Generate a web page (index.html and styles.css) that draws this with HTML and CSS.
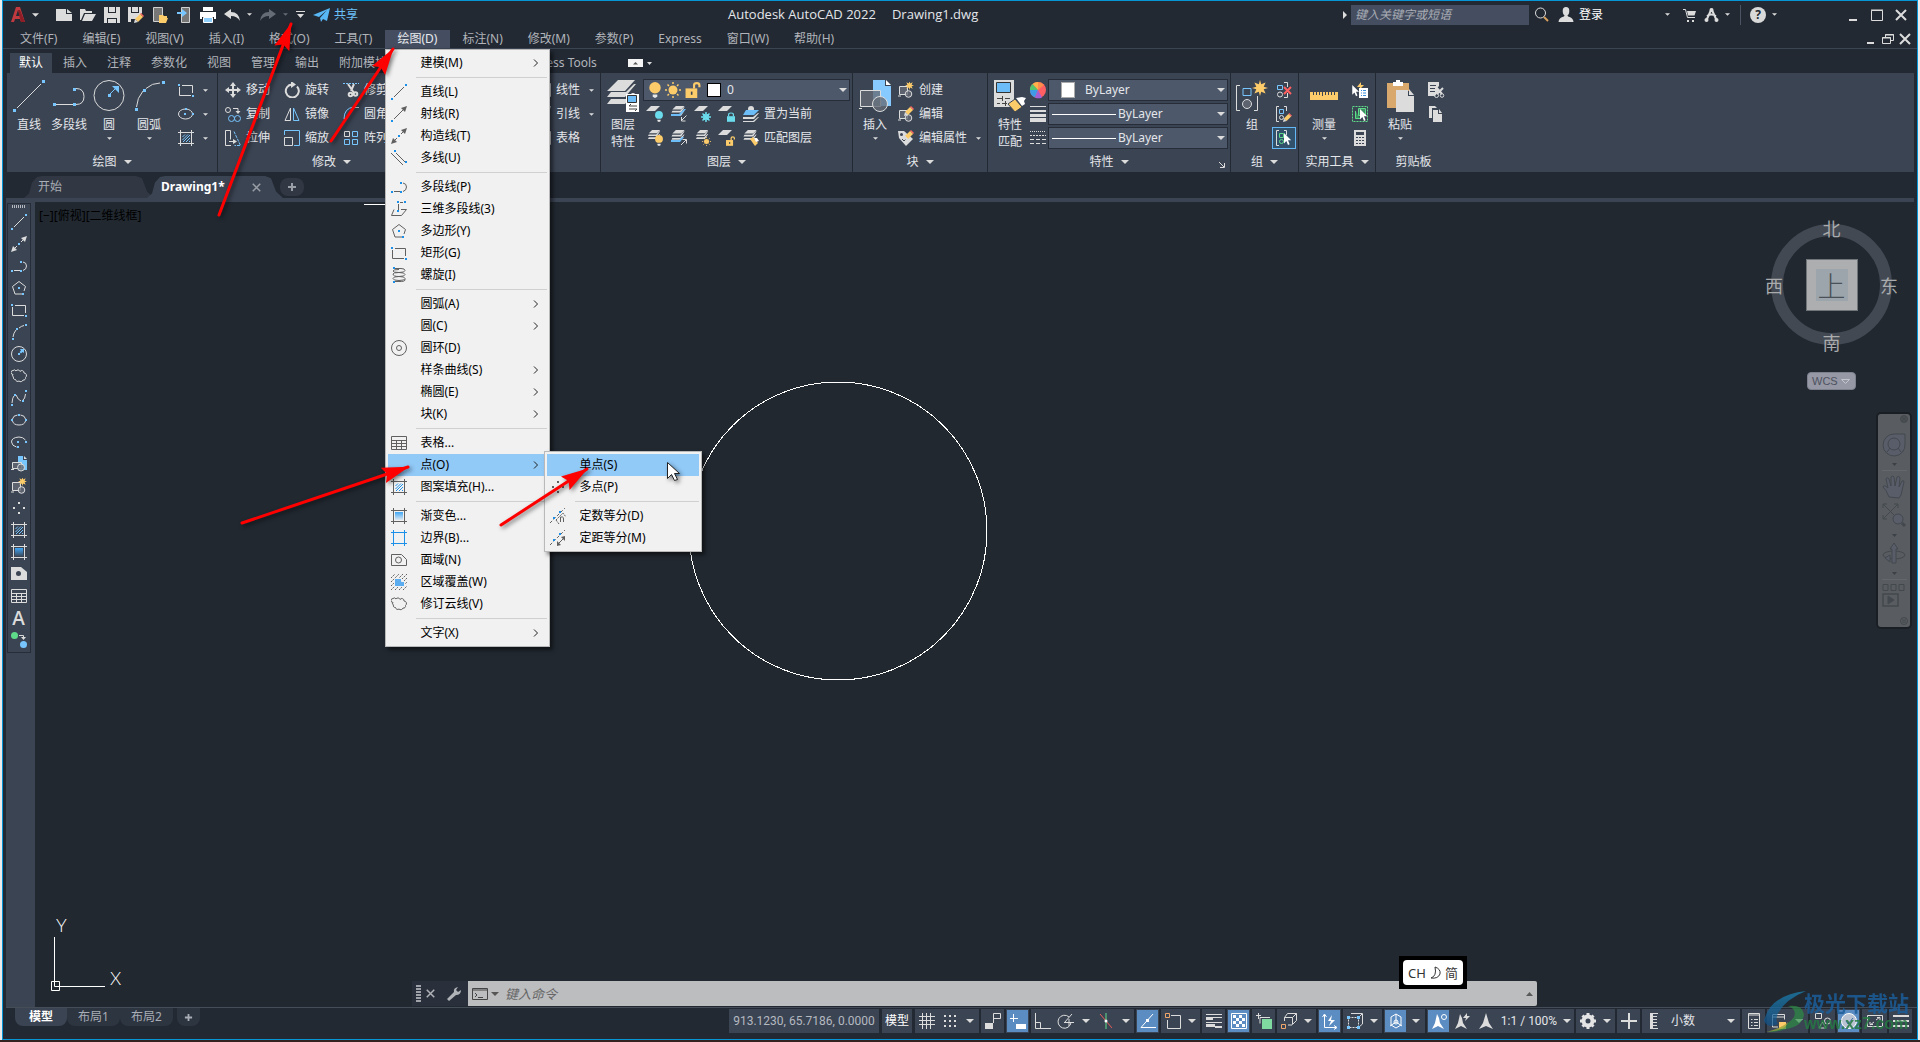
FILE: index.html
```html
<!DOCTYPE html>
<html lang="zh-CN">
<head>
<meta charset="utf-8">
<title>Autodesk AutoCAD 2022 - Drawing1.dwg</title>
<link rel="stylesheet" href="styles.css">
</head>
<body>
<svg class="defs" aria-hidden="true">
  <defs>
    <linearGradient id="fade" x1="0" y1="0" x2="0" y2="1"><stop offset="0" stop-color="#3fa6f5"/><stop offset="1" stop-color="#3fa6f5" stop-opacity=".1"/></linearGradient>
    <linearGradient id="wave" x1="0" y1="0" x2="0" y2="1"><stop offset="0" stop-color="#1d86b8"/><stop offset="1" stop-color="#0f4f86"/></linearGradient>
  </defs>
  <symbol id="caret" viewBox="0 0 8 4"><path class="f" d="M0 0h8L4 4z"/></symbol>
  <symbol id="chev" viewBox="0 0 6 8"><path class="s" d="M1 .5L4.500 4 1 7.500"/></symbol>
  <symbol id="line" viewBox="0 0 16 16"><path class="s" d="M3 13L13 3"/><path class="d" d="M0 14h2v2H0zM14 0h2v2h-2z"/></symbol>
  <symbol id="ray" viewBox="0 0 16 16"><path class="s" d="M3 13L13 3"/><path class="f" d="M16 0l-2 6-4-4z"/><path class="d" d="M0 14h2v2H0z"/></symbol>
  <symbol id="xline" viewBox="0 0 16 16"><path class="s" d="M3 13l3-3M10 6l3-3"/><path class="f" d="M16 0l-2 6-4-4zM0 16l2-6 4 4z"/><path class="d" d="M7 7h2v2H7z"/></symbol>
  <symbol id="mline" viewBox="0 0 16 16"><path class="s" d="M0 3l12 12M5 3l9 9"/><path class="d" d="M3 0h2v2H3zM14 11h2v2h-2z"/></symbol>
  <symbol id="pline" viewBox="0 0 16 16"><path class="s" d="M3 12.500h6M12 4q3.500.5 3.500 4T12 12.500"/><path class="d" d="M0 12h2v2H0zM9 12h2v2H9zM9 3h2v2H9z"/></symbol>
  <symbol id="p3d" viewBox="0 0 16 16"><path class="s" d="M7.500 3v6M9 1.500h3M3 8.500l-2.500 6h10l5-6H10"/><path class="d" d="M6 0h2v2H6zM13 0h2v2h-2zM6 9h2v2H6z"/></symbol>
  <symbol id="poly" viewBox="0 0 16 16"><path class="s" d="M11 14H4L1.500 6.500 8 1.500l6.500 5L13 11"/><path class="d" d="M7 7h2v2H7zM11 13h2v2h-2z"/></symbol>
  <symbol id="rect" viewBox="0 0 16 16"><path class="s" d="M4 3.500h10.500V11M1.500 5v8.500H13"/><path class="d" d="M0 2h2v2H0zM14 13h2v2h-2z"/></symbol>
  <symbol id="helix" viewBox="0 0 16 16"><path class="s" d="M4 1.500h6q4 0 4 2t-6 2-6-1.500 6-1.500M2 7q0-1.500 6-1.500t6 2-6 2-6-2.500M2 11.500q0-2 6-2t6 2-6 2-6-2M14 12q1 3-7 2.500H4"/><path class="d" d="M2 0h2v2H2zM2 14h2v2H2z"/></symbol>
  <symbol id="arc" viewBox="0 0 16 16"><path class="s" d="M2 13q.5-4 3-7M8 4q2.500-2 5-2.500"/><path class="d" d="M1 14h2v2H1zM5 4h2v2H5zM14 0h2v2h-2z"/></symbol>
  <symbol id="circ" viewBox="0 0 16 16"><circle class="s" cx="8" cy="8" r="7.500"/><path class="d" d="M7 7h2v2H7zM9 3h4v4l-1.500-1L10 7.500 8.500 6 10 4.500z"/></symbol>
  <symbol id="donut" viewBox="0 0 16 16"><circle class="s" cx="8" cy="8" r="7.500"/><circle class="s" cx="8" cy="8" r="2.500"/></symbol>
  <symbol id="cloud" viewBox="0 0 16 16"><path class="s" d="M2 6.500A2 2 0 0 1 2 2.500A2 2 0 0 1 5 3A2.200 2.200 0 0 1 9 3.500A2.200 2.200 0 0 1 13 5A2.500 2.500 0 0 1 14.500 9.500A2 2 0 0 1 12 12A2.400 2.400 0 0 1 8 13A2.200 2.200 0 0 1 4.500 11.500A1.800 1.800 0 0 1 2.500 9A1.600 1.600 0 0 1 2 6.500z"/></symbol>
  <symbol id="spline" viewBox="0 0 16 16"><path class="s" d="M1 13q.5-6 2-7M5 5q2 5 5 6M12 10q2-1 2.500-6"/><path class="d" d="M0 14h2v2H0zM3 4h2v2H3zM11 10h2v2h-2zM14 0h2v2h-2z"/></symbol>
  <symbol id="elli" viewBox="0 0 16 16"><path class="s" d="M9.500 3q4.500.5 5 4M6.500 3q-4.500.5-5 4M1.500 9q1 4 6.500 4t6.500-4"/><path class="d" d="M7 2h2v2H7zM0 7h2v2H0zM14 7h2v2h-2z"/></symbol>
  <symbol id="elli2" viewBox="0 0 16 16"><ellipse class="s" cx="7.500" cy="8" rx="7" ry="5"/><path class="d" d="M6 7h2v2H6zM14 7h2v2h-2zM7 2h2v2H7z"/></symbol>
  <symbol id="ellarc" viewBox="0 0 16 16"><path class="s" d="M14.500 6Q12 3 8 3 .5 3.500.5 8q.5 4 5 5"/><path class="d" d="M6 7h2v2H6zM14 7h2v2h-2zM6 12h2v2H6z"/></symbol>
  <symbol id="ins" viewBox="0 0 16 16"><path fill="#78c6ff" d="M7 0h5v4h4v10H7z"/><path class="f" d="M13 0l3 3h-3z"/><path class="s g" d="M1.500 6.500h9v6h-9zM0 13.500h3"/><circle class="s g" cx="10" cy="11.500" r="3.500"/></symbol>
  <symbol id="star" viewBox="0 0 16 16"><path fill="#fccb6a" d="M8 0l1.200 4.300L13.600 2.400 11.700 6.800 16 8l-4.300 1.200 1.900 4.400-4.400-1.900L8 16l-1.200-4.300-4.400 1.900 1.900-4.400L0 8l4.300-1.200-1.900-4.400 4.400 1.900z"/></symbol>
  <symbol id="mkblock" viewBox="0 0 16 16"><path class="s g" d="M1.500 4.500h8v8h-8zM0 14h3"/><circle class="s g" cx="10.500" cy="12" r="3.300"/><use href="#star" x="7" y="-1" width="9" height="9"/></symbol>
  <symbol id="pencil" viewBox="0 0 10 10"><path fill="#ff6464" d="M7 0l3 3-1 1-3-3z"/><path fill="#fccb6a" d="M6 1l3 3-5 5-3-3z"/><path class="f" d="M1 6l3 3-4 1z"/></symbol>
  <symbol id="edblock" viewBox="0 0 16 16"><path class="s g" d="M1.500 4.500h8v8h-8zM0 14h3"/><circle class="s g" cx="10.500" cy="12" r="3.300"/><use href="#pencil" x="6" y="0" width="10" height="10"/></symbol>
  <symbol id="attr" viewBox="0 0 16 16"><path class="f" d="M0 1h6l9 8-7 7-7-8z"/><circle cx="3.500" cy="4.500" r="1.500" fill="#3b4453"/><path d="M4 9l2 2 4-4" fill="none" stroke="#3b4453"/><use href="#pencil" x="6" y="0" width="10" height="10"/></symbol>
  <symbol id="pts" viewBox="0 0 16 16"><path class="f" d="M7 2h2v2H7zM2 7h2v2H2zM12 7h2v2h-2zM7 12h2v2H7z"/></symbol>
  <symbol id="hatch" viewBox="0 0 16 16"><path class="s" d="M0 2.500h16M0 13.500h16M2.500 0v16M13.500 0v16"/><path class="sd" d="M4.500 7L7 4.500M4.500 10l5.500-5.500M5 12l7-7M8 12l4-4M11 12l1-1"/></symbol>
  <symbol id="grad" viewBox="0 0 16 16"><path class="s" d="M0 2.500h16M0 13.500h16M2.500 0v16M13.500 0v16"/><path fill="url(#fade)" d="M4 4h8v8H4z"/></symbol>
  <symbol id="bound" viewBox="0 0 16 16"><path class="sd" d="M0 2.500h16M0 13.500h16M2.500 0v16M13.500 0v16"/></symbol>
  <symbol id="region" viewBox="0 0 16 16"><path class="s" d="M.5 2.500h10l5 5v6H.5z"/><circle class="s" cx="7.500" cy="8" r="3"/></symbol>
  <symbol id="regionf" viewBox="0 0 16 16"><path class="f" d="M0 1h10l6 5v8H0z"/><circle cx="7.500" cy="7.500" r="2.500" fill="#3b4453"/></symbol>
  <symbol id="wipe" viewBox="0 0 16 16"><path class="s" stroke-dasharray="2 1" d="M0 4l4-4M0 8l8-8M0 12L12 0M0 16L16 0M4 16L16 4M8 16l8-8M12 16l4-4"/><path fill="#5badf0" stroke="#f1f1f1" d="M3.500 4.500h7v3h3v5h-10z"/></symbol>
  <symbol id="tbl" viewBox="0 0 16 16"><path class="s" d="M.5 1.500h15v13H.5zM0 5.500h16M0 8.500h16M0 11.500h16M5.500 5v9M10.500 5v9"/></symbol>
  <symbol id="addsel" viewBox="0 0 16 16"><circle cx="3.500" cy="3.500" r="3.500" fill="#5fdc8a"/><circle cx="12.500" cy="12.500" r="3.500" fill="#78c6ff"/><path class="s" d="M8 3.500h4.500V6"/><path class="f" d="M10 5h5l-2.500 3z"/></symbol>
  <symbol id="divn" viewBox="0 0 16 16"><path class="s" stroke-dasharray="3 2" d="M0 15L15 0"/><path class="s" stroke-dasharray="2 1" d="M6 12l7-7 3 4M6 12l3 4"/><path class="s" d="M10.500 14V9h2q1 0 1 2v3"/><path class="d" d="M3 9h2v2H3zM9 3h2v2H9z"/></symbol>
  <symbol id="divm" viewBox="0 0 16 16"><path class="s" stroke-dasharray="3 2" d="M0 15L15 0"/><path class="s" d="M8 14l6-6"/><path class="f" d="M7 16v-5l4 4zM15 6v5l-4-4z"/><path class="d" d="M3 9h2v2H3zM9 3h2v2H9z"/></symbol>
  <symbol id="move" viewBox="0 0 16 16"><path class="s2" d="M8 2v12M2 8h12"/><path class="f" d="M8 0l3 4H5zM8 16l3-4H5zM0 8l4-3v6zM16 8l-4-3v6z"/></symbol>
  <symbol id="copy" viewBox="0 0 16 16"><circle class="s" cx="3" cy="4" r="2.500"/><circle class="sd" cx="6.500" cy="12.500" r="3"/><circle class="sd" cx="12.500" cy="12.500" r="3"/><path class="s" d="M8 2.500h5V6"/><path class="f" d="M10.500 5h5L13 8z"/></symbol>
  <symbol id="stretch" viewBox="0 0 16 16"><path class="s" d="M6 15.500H.5V.5h5v9M4 11.500h5"/><path class="f" d="M8 9l4 2.500L8 14z"/><path class="sd" stroke-dasharray="3 1" d="M9 1.500l6.500 14h-6"/></symbol>
  <symbol id="rot" viewBox="0 0 16 16"><path class="s2" d="M13 4.500A6.500 6.500 0 1 1 8 2.500"/><path class="f" d="M7 -1l5 3.500-5 3.500z"/></symbol>
  <symbol id="mirror" viewBox="0 0 16 16"><path class="s" d="M6.500 2v12.500H1z"/><path class="sd" d="M9.500 2v12.500H15z"/></symbol>
  <symbol id="scale" viewBox="0 0 16 16"><path class="sd" d="M.5 5V.5h15v15H10"/><path class="s" d="M.5 7.500h8v8h-8z"/></symbol>
  <symbol id="trim" viewBox="0 0 16 16"><path class="sd" stroke-dasharray="2 1" d="M0 1.500h16"/><path class="s2" d="M5 2l6 9M11 2L8 9"/><circle class="s2" cx="7.500" cy="12.500" r="1.800"/><circle class="s2" cx="12.500" cy="12" r="1.800"/></symbol>
  <symbol id="fillet" viewBox="0 0 16 16"><path class="sd" d="M1 13q0-11 10-12"/><path class="s" d="M1.500 12v4M10 1.500h6"/></symbol>
  <symbol id="array" viewBox="0 0 16 16"><path class="s" d="M1.500 1.500h5v5h-5z"/><path class="sd" d="M9.500 1.500h5v5h-5zM1.500 9.500h5v5h-5zM9.500 9.500h5v5h-5z"/></symbol>
  <symbol id="sheets" viewBox="0 0 16 16"><path class="f" d="M5 0h10l-4 4H1zM1 5.500h9l4-4h1l-4 6H0zM1 9h9l4-4h1l-4 6H0z"/></symbol>
  <symbol id="sheet1" viewBox="0 0 16 16"><path class="f" d="M5 1h9l-5 5H0z"/></symbol>
  <symbol id="bulb" viewBox="0 0 10 14"><circle cx="5" cy="5" r="5" fill="var(--c,#fccb6a)"/><path fill="#e8e8e8" d="M3 11h4v2l-2 1-2-1z"/></symbol>
  <symbol id="sun" viewBox="0 0 16 16"><circle cx="8" cy="8" r="4.500" fill="#fccb6a"/><path stroke="#fccb6a" stroke-width="1.500" d="M8 0v2M8 14v2M0 8h2M14 8h2M2.500 2.500l1.500 1.500M12 12l1.500 1.500M2.500 13.500L4 12M12 4l1.500-1.500"/></symbol>
  <symbol id="unlock" viewBox="0 0 14 15"><path fill="#fccb6a" d="M0 6h11v9H0z"/><path d="M8 6V3q0-2 2.500-2T13 3v2" fill="none" stroke="#fccb6a" stroke-width="2"/><path d="M5 9h1.500v3H5z" fill="#3b4453"/></symbol>
  <symbol id="lock" viewBox="0 0 10 12"><path fill="#6bdcec" d="M0 5h10v7H0z"/><path d="M2 5V3q0-2 3-2t3 2v2" fill="none" stroke="#6bdcec" stroke-width="1.500"/></symbol>
  <symbol id="flake" viewBox="0 0 10 10"><path stroke="#6bdcec" stroke-width="1.500" d="M5 0v10M0 5h10M1.500 1.500l7 7M8.500 1.500l-7 7"/><circle cx="5" cy="5" r="3" fill="none" stroke="#6bdcec"/></symbol>
  <symbol id="arrptr" viewBox="0 0 10 16"><path fill="#fff" d="M0 0v13l3-3 2 5 2-1-2-5h4z"/></symbol>
  <symbol id="x" viewBox="0 0 12 12"><path class="s2" d="M1 1l10 10M11 1L1 11"/></symbol>
  <symbol id="plus" viewBox="0 0 10 10"><path class="s2" d="M5 1v8M1 5h8"/></symbol>
  <symbol id="person" viewBox="0 0 16 16"><path class="f" d="M8 0q3.500 0 3.500 4T9.500 9q0 1 3 2t3.500 5H0q.5-4 3.500-5t3-2Q4.500 8 4.500 4T8 0z"/></symbol>
</svg>

<div class="app">
  <header class="title">
    <div class="quick">
      <button class="logo" aria-label="应用程序菜单"><svg width="14" height="15" viewBox="0 0 14 15"><path fill="#c23a3f" d="M5 0h4l5 15h-4l-1-3H4l-1 3H0zM7 3L5 9h4z"/><path fill="#8f1d25" d="M7 3l2 0 5 12h-4l-1-3z"/></svg><svg class="c" width="7" height="4"><use href="#caret"/></svg></button>
      <button aria-label="新建"><svg width="16" height="12" viewBox="0 0 16 12"><path class="f" d="M0 0h10v5h6v7H0zM11 0l5 4h-5z"/></svg></button>
      <button aria-label="打开"><svg width="16" height="12" viewBox="0 0 16 12"><path class="f" d="M0 0h5l1 2h6v2H4L1 11H0zM5 5h11l-4 7H2z"/></svg></button>
      <button aria-label="保存"><svg width="16" height="16" viewBox="0 0 16 16"><path class="f" d="M0 0h4v6h8V0h4v16h-3v-5H3v5H0zM5 0h6v5H5zM4 12h8v4H4z"/></svg></button>
      <button aria-label="另存为"><svg width="16" height="16" viewBox="0 0 16 16"><path class="f" d="M0 0h3v6h8V0h3v6L8 12H3v3H0zM4 0h6v5H4z"/><use href="#pencil" x="6" y="6" width="10" height="10"/></svg></button>
      <button aria-label="从移动端打开"><svg width="16" height="16" viewBox="0 0 16 16"><path fill="#777" stroke="#d0d0d0" d="M1.500.5h9v14h-9z"/><path fill="#fccb6a" d="M7 8h4l1 1h3v2h1l-2 5H7z"/></svg></button>
      <button aria-label="保存到移动端"><svg width="16" height="16" viewBox="0 0 16 16"><path fill="#777" stroke="#d0d0d0" d="M5.500.5h8v15h-8z"/><path fill="#78c6ff" d="M1 5h5V2l5 4-5 4V7H1z"/></svg></button>
      <button aria-label="打印"><svg width="16" height="16" viewBox="0 0 16 16"><path fill="#fff" d="M3 0h10v4H3zM0 5h16v7h-2v-2H2v2H0z"/><path fill="#8fd0ff" stroke="#fff" d="M3.500 10.500h9v5h-9z"/></svg></button>
      <button aria-label="放弃"><svg width="16" height="12" viewBox="0 0 16 12"><path class="f" d="M0 5l7-5v3q8 0 9 9-3-5-9-5v3z"/></svg><svg class="c" width="5" height="3"><use href="#caret"/></svg></button>
      <button class="off" aria-label="重做"><svg width="16" height="12" viewBox="0 0 16 12"><path class="f" d="M16 5L9 0v3Q1 3 0 12q3-5 9-5v3z"/></svg><svg class="c" width="5" height="3"><use href="#caret"/></svg></button>
      <button aria-label="自定义"><svg width="9" height="8" viewBox="0 0 9 8"><path class="f" d="M0 0h9v1H0zM1 3h7L4.500 7z"/></svg></button>
      <button class="share"><svg width="17" height="14" viewBox="0 0 17 14"><path fill="#58b7f5" d="M17 0l-3 13-4-2-2 3-1-4 7-8-8 7-6-2z"/></svg>共享</button>
    </div>
    <h1><span>Autodesk AutoCAD 2022</span><span>Drawing1.dwg</span></h1>
    <div class="info">
      <svg width="4" height="8" viewBox="0 0 4 8"><path class="f" d="M0 0l4 4-4 4z"/></svg>
      <input class="search" type="text" placeholder="键入关键字或短语" aria-label="搜索">
      <button aria-label="搜索"><svg width="14" height="15" viewBox="0 0 14 15"><circle class="s" cx="5.500" cy="6" r="5"/><path stroke="#d8a15c" stroke-width="2" d="M9 10l4 4"/></svg></button>
      <button class="login"><svg width="16" height="15"><use href="#person"/></svg>登录</button>
      <button class="wide" aria-label="帐户"><svg width="5" height="3"><use href="#caret"/></svg></button>
      <button aria-label="商店"><svg width="13" height="14" viewBox="0 0 13 14"><path class="s" d="M0 1.500h2.500l2 8H12"/><path class="f" d="M4 3h9l-1.500 4.500H5zM4 12h2v2H4zM9 12h2v2H9z"/></svg></button>
      <button aria-label="Autodesk"><svg width="15" height="14" viewBox="0 0 15 14"><path class="s2" d="M7.500 1l-5 11M7.500 1l5 11M3 8q4-3 9 0"/><circle class="f" cx="2.500" cy="12" r="2"/><circle class="f" cx="12.500" cy="12" r="2"/><circle class="f" cx="7.500" cy="2" r="2"/></svg><svg class="c" width="5" height="3"><use href="#caret"/></svg></button>
      <span class="bar"></span>
      <button class="help" aria-label="帮助"><span>?</span><svg class="c" width="5" height="3"><use href="#caret"/></svg></button>
      <div class="win">
        <button aria-label="最小化"><svg width="12" height="12" viewBox="0 0 12 12"><path class="f" d="M2 10h8v2H2z"/></svg></button>
        <button aria-label="最大化"><svg width="12" height="12" viewBox="0 0 12 12"><path class="s" d="M.5 1.500h11v10H.5zM0 1h12"/></svg></button>
        <button aria-label="关闭"><svg width="12" height="12"><use href="#x"/></svg></button>
      </div>
    </div>
  </header>

  <nav class="menubar">
    <button>文件(F)</button><button>编辑(E)</button><button>视图(V)</button><button>插入(I)</button><button>格式(O)</button><button>工具(T)</button>
    <div class="open">
      <button class="on">绘图(D)</button>
      <ul class="menu">
        <li><span></span>建模(M)<svg class="ar"><use href="#chev"/></svg></li>
        <li class="sep"></li>
        <li><svg><use href="#line"/></svg>直线(L)</li>
        <li><svg><use href="#ray"/></svg>射线(R)</li>
        <li><svg><use href="#xline"/></svg>构造线(T)</li>
        <li><svg><use href="#mline"/></svg>多线(U)</li>
        <li class="sep"></li>
        <li><svg><use href="#pline"/></svg>多段线(P)</li>
        <li><svg><use href="#p3d"/></svg>三维多段线(3)</li>
        <li><svg><use href="#poly"/></svg>多边形(Y)</li>
        <li><svg><use href="#rect"/></svg>矩形(G)</li>
        <li><svg><use href="#helix"/></svg>螺旋(I)</li>
        <li class="sep"></li>
        <li><span></span>圆弧(A)<svg class="ar"><use href="#chev"/></svg></li>
        <li><span></span>圆(C)<svg class="ar"><use href="#chev"/></svg></li>
        <li><svg><use href="#donut"/></svg>圆环(D)</li>
        <li><span></span>样条曲线(S)<svg class="ar"><use href="#chev"/></svg></li>
        <li><span></span>椭圆(E)<svg class="ar"><use href="#chev"/></svg></li>
        <li><span></span>块(K)<svg class="ar"><use href="#chev"/></svg></li>
        <li class="sep"></li>
        <li><svg><use href="#tbl"/></svg>表格...</li>
        <li class="hot"><span></span>点(O)<svg class="ar"><use href="#chev"/></svg>
          <ul class="menu sub">
            <li class="hot"><span></span>单点(S)</li>
            <li><svg><use href="#pts"/></svg>多点(P)</li>
            <li class="sep"></li>
            <li><svg><use href="#divn"/></svg>定数等分(D)</li>
            <li><svg><use href="#divm"/></svg>定距等分(M)</li>
          </ul>
        </li>
        <li><svg><use href="#hatch"/></svg>图案填充(H)...</li>
        <li class="sep"></li>
        <li><svg><use href="#grad"/></svg>渐变色...</li>
        <li><svg><use href="#bound"/></svg>边界(B)...</li>
        <li><svg><use href="#region"/></svg>面域(N)</li>
        <li><svg><use href="#wipe"/></svg>区域覆盖(W)</li>
        <li><svg><use href="#cloud"/></svg>修订云线(V)</li>
        <li class="sep"></li>
        <li><span></span>文字(X)<svg class="ar"><use href="#chev"/></svg></li>
      </ul>
    </div>
    <button>标注(N)</button><button>修改(M)</button><button>参数(P)</button><button>Express</button><button>窗口(W)</button><button>帮助(H)</button>
    <div class="win docwin">
      <button aria-label="最小化文档"><svg width="12" height="12" viewBox="0 0 12 12"><path class="f" d="M2 9h7v2H2z"/></svg></button>
      <button aria-label="还原文档"><svg width="12" height="12" viewBox="0 0 12 12"><path class="s" d="M3.500 4V1.500h8v6H9M3 2h9M.5 4.500h8v6h-8zM0 5h9"/></svg></button>
      <button aria-label="关闭文档"><svg width="12" height="12"><use href="#x"/></svg></button>
    </div>
  </nav>

  <nav class="tabs">
    <button class="on">默认</button><button>插入</button><button>注释</button><button>参数化</button><button>视图</button><button>管理</button><button>输出</button><button>附加模块</button><button class="under" aria-label="协作与精选应用"></button><button>Express Tools</button>
    <button class="mini" aria-label="最小化功能区"><svg width="24" height="8" viewBox="0 0 24 8"><path fill="#f4f4f4" d="M0 0h15v8H0z"/><path fill="#555" d="M5 5.500h5L7.500 3z"/><path class="f" d="M19 3h5l-2.500 3z"/></svg></button>
  </nav>

  <section class="ribbon">
    <div class="panel draw">
      <div class="body">
        <button class="big"><svg viewBox="0 0 32 32"><path class="s" d="M4 28L28 4"/><path class="d" d="M0 29h3v3H0zM29 0h3v3h-3z"/></svg>直线</button>
        <button class="big"><svg viewBox="0 0 32 32"><path class="s" d="M3 24.500h17M23 8.500q8 0 8 8t-8 8"/><path class="d" d="M0 23h3v3H0zM20 23h3v3h-3zM20 8h3v3h-3z"/></svg>多段线</button>
        <button class="big"><svg viewBox="0 0 32 32"><circle class="s" cx="16" cy="15.500" r="15"/><path class="sd" d="M17 14l6-6"/><path class="d" d="M15 14h3v3h-3zM19 6h7v7z"/></svg>圆<svg class="c"><use href="#caret"/></svg></button>
        <button class="big"><svg viewBox="0 0 32 32"><path class="s" d="M3.500 27Q4 18 10 11M13 8.500Q19 3 27 3"/><path class="d" d="M2 28h3v3H2zM10 9h3v3h-3zM29 1h3v3h-3z"/></svg>圆弧<svg class="c"><use href="#caret"/></svg></button>
        <div class="col nar">
          <button aria-label="矩形"><svg><use href="#rect"/></svg><svg class="c"><use href="#caret"/></svg></button>
          <button aria-label="椭圆"><svg><use href="#elli2"/></svg><svg class="c"><use href="#caret"/></svg></button>
          <button aria-label="图案填充"><svg><use href="#hatch"/></svg><svg class="c"><use href="#caret"/></svg></button>
        </div>
      </div>
      <button class="name">绘图<svg><use href="#caret"/></svg></button>
    </div>
    <div class="panel modify">
      <div class="body">
        <div class="col"><button><svg><use href="#move"/></svg>移动</button><button><svg><use href="#copy"/></svg>复制</button><button><svg><use href="#stretch"/></svg>拉伸</button></div>
        <div class="col"><button><svg><use href="#rot"/></svg>旋转</button><button><svg><use href="#mirror"/></svg>镜像</button><button><svg><use href="#scale"/></svg>缩放</button></div>
        <div class="col"><button><svg><use href="#trim"/></svg>修剪</button><button><svg><use href="#fillet"/></svg>圆角</button><button><svg><use href="#array"/></svg>阵列</button></div>
      </div>
      <button class="name">修改<svg><use href="#caret"/></svg></button>
    </div>
    <div class="panel note">
      <div class="body">
        <div class="col">
          <button><svg><use href="#tbl"/></svg>线性<svg class="c"><use href="#caret"/></svg></button>
          <button><svg><use href="#ray"/></svg>引线<svg class="c"><use href="#caret"/></svg></button>
          <button><svg><use href="#tbl"/></svg>表格</button>
        </div>
      </div>
    </div>
    <div class="panel layer">
      <div class="body">
        <button class="big"><svg viewBox="0 0 32 32"><path class="f" d="M11 0h17L18 11H0zM0 17l4-5h15l8-8h2L18 17zM0 24l4-5h15l6-6h3L18 24z"/><path fill="#fff" d="M19 14h13v18H19z"/><path fill="#6cbcf7" stroke="#333" d="M20.500 15.500h9v7h-9z"/><path class="k" d="M22 26h8M22 26l2-2M22 29h8l-2 2"/></svg>图层<br>特性</button>
        <div class="stack">
          <div class="combo"><svg class="ib"><use href="#bulb"/></svg><svg><use href="#sun"/></svg><svg><use href="#unlock"/></svg><i class="sw"></i><select aria-label="图层"><option>0</option></select><svg class="c"><use href="#caret"/></svg></div>
          <div class="tools">
            <button aria-label="关"><svg viewBox="0 0 16 16"><use href="#sheet1" x="-1" y="-1" width="16" height="16"/><use class="cy" href="#bulb" x="8" y="5" width="8" height="11"/></svg></button>
            <button aria-label="隔离"><svg viewBox="0 0 16 16"><use href="#sheets" width="15" height="14"/><path fill="#6cbcf7" d="M0 8h8l5-5h2l-6 7H0z"/><path class="s" d="M15.500 9.500l-5 5M10.500 11v4h4"/></svg></button>
            <button aria-label="冻结"><svg viewBox="0 0 16 16"><use href="#sheet1" x="-1" y="-1" width="16" height="16"/><use href="#flake" x="6" y="6" width="10" height="10"/></svg></button>
            <button aria-label="锁定"><svg viewBox="0 0 16 16"><use href="#sheet1" x="-1" y="-1" width="16" height="16"/><use href="#lock" x="8" y="6" width="8" height="10"/></svg></button>
            <button class="t"><svg viewBox="0 0 16 16"><circle class="f" cx="8" cy="3" r="3"/><path fill="#6cbcf7" d="M3 4h13l-5 5H0z"/><path class="f" d="M0 11h10l5-4h1l-5 6H0zM0 15h10l5-4h1l-5 5H0z"/></svg>置为当前</button>
          </div>
          <div class="tools">
            <button aria-label="打开所有图层"><svg viewBox="0 0 16 16"><use href="#sheets" width="15" height="13"/><use href="#bulb" x="8" y="5" width="8" height="11"/></svg></button>
            <button aria-label="取消隔离"><svg viewBox="0 0 16 16"><use href="#sheets" width="15" height="14"/><path fill="#6cbcf7" d="M0 10h8l3-3h2l-4 5H0z"/><path class="s" d="M10 15l5-5M11.500 9.500h4v4"/></svg></button>
            <button aria-label="解冻"><svg viewBox="0 0 16 16"><use href="#sheets" width="15" height="13"/><use href="#sun" x="7" y="7" width="9" height="9"/></svg></button>
            <button aria-label="解锁"><svg viewBox="0 0 16 16"><use href="#sheet1" x="-1" y="-1" width="16" height="16"/><use href="#unlock" x="7" y="6" width="9" height="10"/></svg></button>
            <button class="t"><svg viewBox="0 0 16 16"><use href="#sheets" width="15" height="14"/><path fill="#fccb6a" d="M7 9l3-2 5 6-3 3z"/><path fill="#fff" d="M11 8l3 0 2 3-3 1z"/></svg>匹配图层</button>
          </div>
        </div>
      </div>
      <button class="name">图层<svg><use href="#caret"/></svg></button>
    </div>
    <div class="panel block">
      <div class="body">
        <button class="big"><svg viewBox="0 0 32 32"><path fill="#87caff" d="M14 0h12v6h6v20H14z"/><path fill="#fff" d="M27 0l5 5h-5z"/><path class="s g" d="M1.500 10.500h20v16h-20zM0 28.500h3"/><circle class="s g" cx="21" cy="24" r="7.500"/></svg>插入<svg class="c"><use href="#caret"/></svg></button>
        <div class="col">
          <button><svg><use href="#mkblock"/></svg>创建</button>
          <button><svg><use href="#edblock"/></svg>编辑</button>
          <button><svg><use href="#attr"/></svg>编辑属性<svg class="c"><use href="#caret"/></svg></button>
        </div>
      </div>
      <button class="name">块<svg><use href="#caret"/></svg></button>
    </div>
    <div class="panel props">
      <div class="body">
        <button class="big"><svg viewBox="0 0 32 32"><path class="f" d="M0 0h20v27H0z"/><path fill="#6cbcf7" stroke="#333" d="M2.500 2.500h14v10h-14z"/><path class="k" d="M3 18.500h6M11 18.500h5M8.500 16v5M3 23.500h3M8 23.500h5M11.500 21v5"/><path fill="#fccb6a" stroke="#3b4453" d="M14 24l7-5 7 8-7 5z"/><path fill="#fff" d="M22 18l6-1 4 1-2 3 1 3-3 2z"/></svg>特性<br>匹配</button>
        <div class="stack">
          <div class="prow"><svg viewBox="0 0 16 16"><circle cx="8" cy="8" r="8" fill="#ff5f63"/><path fill="#ffb14a" d="M8 8l-5.500-6A8 8 0 0 1 8 0z"/><path fill="#ff8c4a" d="M8 8V0a8 8 0 0 1 6 3z"/><path fill="#54c46f" d="M8 8L0 9a8 8 0 0 1 2.500-7z"/><path fill="#3f9be8" d="M8 8L0 8a8 8 0 0 0 5 7.500z"/><path fill="#a35fd6" d="M8 8l-3 7.500a8 8 0 0 0 7 0z"/></svg><div class="combo"><i class="sw big2"></i><select aria-label="颜色"><option>ByLayer</option></select><svg class="c"><use href="#caret"/></svg></div></div>
          <div class="prow"><svg viewBox="0 0 16 16"><path class="f" d="M0 0h16v1H0zM0 4h16v2H0zM0 8h16v3H0zM0 12h16v4H0z"/></svg><div class="combo"><i class="ln"></i><select aria-label="线宽"><option>ByLayer</option></select><svg class="c"><use href="#caret"/></svg></div></div>
          <div class="prow"><svg viewBox="0 0 16 16"><path class="s" stroke-dasharray="1 1" d="M0 1.500h16"/><path class="s" stroke-dasharray="2 1" d="M0 5.500h16"/><path class="s" stroke-dasharray="4 2" d="M0 9.500h16M0 13.500h16"/></svg><div class="combo"><i class="ln"></i><select aria-label="线型"><option>ByLayer</option></select><svg class="c"><use href="#caret"/></svg></div></div>
        </div>
      </div>
      <button class="name">特性<svg><use href="#caret"/></svg></button>
      <button class="launch" aria-label="特性选项板"><svg width="6" height="6" viewBox="0 0 6 6"><path class="s" d="M0 0l5 5M5.500 1v4.500H1"/></svg></button>
    </div>
    <div class="panel group">
      <div class="body">
        <button class="big"><svg viewBox="0 0 32 32"><path class="s" d="M4 5.500H.5v25H4M18 30.500h3.500V16"/><path class="sd" d="M7 8.500h8v7H7z"/><circle class="s g" cx="11" cy="24" r="4.500"/><use href="#star" x="16" y="0" width="16" height="16"/></svg>组</button>
        <div class="col tight">
          <button aria-label="解除编组"><svg viewBox="0 0 16 16"><path class="sd" d="M1.500 3.500h5v4h-5z"/><circle class="s" cx="4" cy="12.500" r="2.500"/><path class="s" d="M8 .5h3.500V5M11.500 11v4.500H8"/><path stroke="#ff5f5f" stroke-width="2" d="M8 5l7 7M15 5l-7 7"/></svg></button>
          <button aria-label="组编辑"><svg viewBox="0 0 16 16"><path class="s" d="M3 .5H.5v15H3M8 .5h2.500V5"/><path class="sd" d="M3.500 3.500h4v4h-4z"/><circle class="s" cx="5.500" cy="11.500" r="2"/><use href="#pencil" x="7" y="7" width="9" height="9"/></svg></button>
          <button class="sel" aria-label="启用组选择"><svg viewBox="0 0 16 16"><path class="s" d="M3 .5H.5v15H3M8 .5h2.500V5"/><path stroke="#5fdc8a" fill="none" d="M3.500 3.500h4v4h-4z"/><circle stroke="#5fdc8a" fill="none" cx="5.500" cy="11.500" r="2"/><use href="#arrptr" x="8" y="3" width="8" height="13"/></svg></button>
        </div>
      </div>
      <button class="name">组<svg><use href="#caret"/></svg></button>
    </div>
    <div class="panel util">
      <div class="body">
        <button class="big"><svg viewBox="0 0 32 32"><path fill="#fccb6a" d="M2 12h28v8H2z"/><path stroke="#3b4453" d="M5.500 12v3M8.500 12v3M11.500 12v3M14.500 12v4M17.500 12v3M20.500 12v3M23.500 12v3M26.500 12v3"/></svg>测量<svg class="c"><use href="#caret"/></svg></button>
        <div class="col tight">
          <button aria-label="快速选择"><svg viewBox="0 0 16 16"><use href="#arrptr" x="0" y="3" width="8" height="12"/><path fill="#fccb6a" d="M9 0L5 5h3L7 8l5-5H9z"/><path fill="#fff" d="M7 6h9v10H7z"/><path stroke="#3a8fd8" d="M9 8.500h1M11 8.500h3M9 11h1M11 11h3M9 13.500h1M11 13.500h3"/></svg></button>
          <button aria-label="全部选择"><svg viewBox="0 0 16 16"><path fill="none" stroke="#5fdc8a" stroke-dasharray="2 1" d="M.5.5h15v15H.5z"/><path fill="#3d8f63" stroke="#5fdc8a" d="M6.500 2.500h7v7h-7zM3.500 5v7.500H8"/><use href="#arrptr" x="8" y="3" width="8" height="13"/></svg></button>
          <button aria-label="计算器"><svg viewBox="0 0 16 16"><path class="f" d="M2 0h12v16H2z"/><path fill="#3b4453" d="M4 2h8v3H4zM4 7h2v1H4zM7 7h2v1H7zM10 7h2v1h-2zM4 10h2v1H4zM7 10h2v1H7zM10 10h2v1h-2zM4 13h2v1H4zM7 13h2v1H7zM10 13h2v1h-2z"/></svg></button>
        </div>
      </div>
      <button class="name">实用工具<svg><use href="#caret"/></svg></button>
    </div>
    <div class="panel clip">
      <div class="body">
        <button class="big"><svg viewBox="0 0 32 32"><path fill="#d9a86c" d="M3 3h22v8H12v17H3z"/><path fill="#fff" d="M9 2h3V0h4v2h3v4H9z"/><path class="f" d="M12 10h12v6h6v16H12zM25 9l5 6h-5z"/></svg>粘贴<svg class="c"><use href="#caret"/></svg></button>
        <div class="col tight">
          <button aria-label="剪切"><svg viewBox="0 0 16 16"><path class="f" d="M0 0h11v4L9 6l2 3-4 5H0z"/><path stroke="#3b4453" d="M2 3.500h6M2 6.500h5M2 9.500h5"/><path class="s2" d="M8 5l6 7M15 6l-6 6"/><circle class="s" cx="8.500" cy="13.500" r="2"/><circle class="s" cx="14" cy="13.500" r="1.800"/></svg></button>
          <button aria-label="复制"><svg viewBox="0 0 16 16"><path class="f" d="M1 0h6l2 2H4v10H1zM5 4h5v4h4v8H5zM11 3l3 4h-3z"/></svg></button>
        </div>
      </div>
      <span class="name">剪贴板</span>
    </div>
  </section>

  <nav class="files">
    <button class="ftab">开始</button>
    <button class="ftab on">Drawing1*<svg width="9" height="9"><use href="#x"/></svg></button>
    <button class="ftab add" aria-label="新图形"><svg width="10" height="10"><use href="#plus"/></svg></button>
  </nav>

  <main class="work">
    <aside class="side">
      <div class="palette">
        <i class="grip"></i>
        <button aria-label="直线"><svg><use href="#line"/></svg></button>
        <button aria-label="构造线"><svg><use href="#xline"/></svg></button>
        <button aria-label="多段线"><svg><use href="#pline"/></svg></button>
        <button aria-label="多边形"><svg><use href="#poly"/></svg></button>
        <button aria-label="矩形"><svg><use href="#rect"/></svg></button>
        <button aria-label="圆弧"><svg><use href="#arc"/></svg></button>
        <button aria-label="圆"><svg><use href="#circ"/></svg></button>
        <button aria-label="修订云线"><svg><use href="#cloud"/></svg></button>
        <button aria-label="样条曲线"><svg><use href="#spline"/></svg></button>
        <button aria-label="椭圆"><svg><use href="#elli"/></svg></button>
        <button aria-label="椭圆弧"><svg><use href="#ellarc"/></svg></button>
        <button aria-label="插入块"><svg><use href="#ins"/></svg></button>
        <button aria-label="创建块"><svg><use href="#mkblock"/></svg></button>
        <button aria-label="点"><svg><use href="#pts"/></svg></button>
        <button aria-label="图案填充"><svg><use href="#hatch"/></svg></button>
        <button aria-label="渐变色"><svg><use href="#grad"/></svg></button>
        <button aria-label="面域"><svg><use href="#regionf"/></svg></button>
        <button aria-label="表格"><svg><use href="#tbl"/></svg></button>
        <button class="mtext">A</button>
        <button aria-label="添加选定对象"><svg><use href="#addsel"/></svg></button>
      </div>
    </aside>
    <div class="canvas">
      <p class="vlabel">[−][俯视][二维线框]</p>
      <svg class="geom" aria-hidden="true">
        <path fill="none" stroke="#fff" d="M329 2.500h30"/>
        <circle cx="803" cy="329" r="149" fill="none" stroke="#fff" shape-rendering="crispEdges"/>
      </svg>
      <svg class="ucs" width="76" height="76" viewBox="0 0 76 76"><path fill="none" stroke="#fff" d="M4.500 18v49.500H55M1.500 62.500h8v9h-8z"/><text x="6" y="13">Y</text><text x="60" y="66">X</text></svg>
      <div class="cube">
        <span class="n">北</span><span class="w">西</span><button class="top"><b>上</b></button><span class="e">东</span><span class="so">南</span>
      </div>
      <button class="wcs">WCS<svg width="9" height="5" viewBox="0 0 9 5"><path fill="none" stroke="#c4c6ce" d="M.5.5h8l-4 4z"/></svg></button>
      <div class="navbar">
        <svg width="32" height="213" viewBox="0 0 32 213" fill="none" stroke="#43484e">
          <circle cx="26" cy="5" r="3.500" fill="#4b5055"/><path d="M24 3l4 4M28 3l-4 4M24 206h4M24 208h4"/>
          <path fill="#585d69" d="M16 20h11v10a11 11 0 1 1-11-10z"/><circle cx="16" cy="30" r="6"/><path d="M9 38l3-4M23 38l-3-4"/>
          <path fill="#585d69" d="M11 83q-3-8-6-10 1-3 5 1l-2-9q1-3 3 0l2 7V63q2-2 3 0l1 9 2-9q2-2 3 1l-1 9 3-6q2-1 2 1l-3 13-2 3z"/>
          <path d="M5 90l15 15M20 90L5 105M5 94v-4h4M16 90h4v4M5 101v4h4"/><circle cx="20" cy="105" r="5" fill="#585d69"/><path stroke-width="3" d="M24 109l3 3"/>
          <ellipse cx="16" cy="141" rx="11" ry="4"/><path fill="#585d69" d="M14 149v-14h-2l4-6 4 6h-2v14zM12 141v7l-5-4z"/>
          <path d="M5 170.500h5v6H5zM13 170.500h5v6h-5zM21 170.500h5v6h-5z"/><path stroke-width="1.500" d="M5 180h15v12H5z"/><path fill="#43484e" d="M10 182l6 4-6 4z"/>
          <path fill="#3c4147" stroke="none" d="M14 49h5l-2.500 3zM14 120h5l-2.500 3zM14 158h5l-2.500 3z"/><path stroke="#64686c" d="M4 56.500h25M4 165.500h25"/><circle cx="26" cy="207" r="3.500"/>
        </svg>
      </div>
      <form class="cmd">
        <div class="grab"><i></i><svg width="9" height="9"><use href="#x"/></svg><svg width="14" height="14" viewBox="0 0 14 14"><path class="f" d="M0 12l7-7q-1-4 4-5L9 3l2 2 3-2q0 5-5 5l-7 6z"/></svg></div>
        <div class="box"><svg width="16" height="12" viewBox="0 0 16 12"><path class="k" d="M.5.500h15v11H.5zM1 2h14M3 5l2 2-2 2M6 9.500h5"/></svg><svg class="c" width="8" height="4"><use href="#caret"/></svg><input type="text" placeholder="键入命令" aria-label="命令"><svg class="c" width="7" height="4" viewBox="0 0 7 4"><path fill="#5a5a5a" d="M0 4h7L3.500 0z"/></svg></div>
      </form>
      <div class="ime"><div><span>CH</span><svg width="11" height="13" viewBox="0 0 11 13"><path fill="none" stroke="#333" d="M5 1q6 2 5 7-2 5-9 4 6-2 4-11z"/></svg><span>简</span></div></div>
    </div>
  </main>

  <footer class="foot">
    <nav class="layouts"><button class="on">模型</button><button>布局1</button><button>布局2</button><button class="add" aria-label="新建布局"><svg width="9" height="9"><use href="#plus"/></svg></button></nav>
    <div class="status">
      <button class="xyz">913.1230, 65.7186, 0.0000</button>
      <button class="mod">模型</button>
      <div class="grp"><button aria-label="栅格"><svg viewBox="0 0 16 16"><path class="s" d="M3.500 0v16M7.500 0v16M11.500 0v16M0 3.500h16M0 7.500h16M0 11.500h16"/></svg></button><button aria-label="捕捉"><svg viewBox="0 0 16 16"><path class="f" d="M2 2h2v2H2zM7 2h2v2H7zM12 2h2v2h-2zM2 7h2v2H2zM7 7h2v2H7zM12 7h2v2h-2zM2 12h2v2H2zM7 12h2v2H7zM12 12h2v2h-2z"/></svg></button><button class="dd w" aria-label="捕捉选项"><svg><use href="#caret"/></svg></button></div>
      <button aria-label="推断约束"><svg viewBox="0 0 16 16"><path class="f" d="M0 10h8v6H0z"/><path class="s" d="M8.500 10V.5h7v5H9"/></svg></button>
      <button class="on" aria-label="动态输入"><svg viewBox="0 0 16 16"><path class="s" d="M3.500 1v8M0 5.500h8"/><path class="f" d="M6 11h10v5H6z"/></svg></button>
      <div class="grp"><button aria-label="正交"><svg viewBox="0 0 16 16"><path class="s" d="M.5 0v15.500H16M.5 9.500h5v6"/></svg></button><button class="g2" aria-label="极轴"><svg viewBox="0 0 16 16"><path class="s" d="M11 4A6.500 6.500 0 1 0 13 9.500M6.500 9.500L14 1M6 9.500h10M11 6v7"/></svg></button><button class="dd" aria-label="极轴选项"><svg><use href="#caret"/></svg></button><button class="g2" aria-label="等轴测"><svg viewBox="0 0 16 16"><path stroke="#e85d5d" d="M2 1l12 14"/><path stroke="#5fdc8a" d="M8 0v16"/><circle cx="8" cy="8" r="1.500" fill="#fff"/></svg></button><button class="dd" aria-label="等轴测选项"><svg><use href="#caret"/></svg></button></div>
      <button class="on" aria-label="对象捕捉追踪"><svg viewBox="0 0 16 16"><path class="s" d="M13 1L1 14.500h15"/><path class="f" d="M6 6h3v3H6z"/></svg></button>
      <div class="grp"><button aria-label="对象捕捉"><svg viewBox="0 0 16 16"><path class="s" d="M6 2.500h9.500v13h-13V7"/><path fill="none" stroke="#f0a56a" d="M.5.5h4v4h-4z"/></svg></button><button class="dd" aria-label="捕捉设置"><svg><use href="#caret"/></svg></button></div>
      <button aria-label="线宽"><svg viewBox="0 0 16 16"><path class="f" d="M0 1h16v1H0zM0 4h9v1H0zM8 4h8v1H8zM0 5h7v2H0zM0 9h16v1H0zM0 11h9v3H0zM9 13h7v2H9z"/></svg></button>
      <button class="on" aria-label="透明度"><svg viewBox="0 0 16 16"><path class="s" d="M.5.5h15v15H.5z"/><path class="f" d="M2 2h3v3H2zM8 2h3v3H8zM5 5h3v3H5zM11 5h3v3h-3zM2 8h3v3H2zM8 8h3v3H8zM5 11h3v3H5zM11 11h3v3h-3z"/></svg></button>
      <button aria-label="选择循环"><svg viewBox="0 0 16 16"><path class="s" d="M2.500 0v6M0 2.500h5M4 10.500V4.500h10"/><path fill="#7fdba0" d="M6 6h10v10H6z"/></svg></button>
      <div class="grp"><button aria-label="三维对象捕捉"><svg viewBox="0 0 16 16"><path class="s" d="M3.500 8V4.500l3-4h9v7l-4 4V4.500h-8M11.500 4.500l4-4M11 12H7"/><path fill="none" stroke="#f0a56a" d="M.5 11.500h4v4h-4z"/></svg></button><button class="dd" aria-label="三维捕捉设置"><svg><use href="#caret"/></svg></button></div>
      <button class="on" aria-label="动态 UCS"><svg viewBox="0 0 16 16"><path class="s" d="M2.500 2v12.500H14M.5 4l2-3 2 3M12 12.500l3 2-3 2"/><path class="f" d="M10 2L6 8h3l-2 5 6-6H9z"/></svg></button>
      <div class="grp"><button aria-label="选择过滤"><svg viewBox="0 0 16 16"><path class="s" stroke-dasharray="2 1" d="M1.500 4.500h10v10h-10z"/><path class="s" d="M4 .5h11.500V11L12 14M12 4l3-3"/><path class="d" d="M0 3h3v3H0zM10 3h3v3h-3zM0 13h3v3H0zM10 13h3v3h-3z"/></svg></button><button class="dd" aria-label="过滤选项"><svg><use href="#caret"/></svg></button></div>
      <div class="grp"><button class="on" aria-label="小控件"><svg viewBox="0 0 16 16"><path class="s" d="M8 1v8L2 13M8 9l6 4M3 4l5-3 5 3v8l-5 3-5-3z"/><circle class="s" cx="8" cy="9" r="2"/></svg></button><button class="dd w" aria-label="小控件选项"><svg><use href="#caret"/></svg></button></div>
      <div class="grp"><button class="on" aria-label="注释可见性"><svg viewBox="0 0 16 16"><path class="f" d="M6 1l2 4 1 5 4 6-6-3-6 3 3-6z"/><circle class="s" cx="13" cy="4" r="2.500"/></svg></button><button class="g2" aria-label="自动缩放"><svg viewBox="0 0 16 16"><path class="f" d="M6 1l2 4 1 5 4 6-6-3-6 3 3-6zM13 0l-4 5h3l-1 3 5-5h-3z"/></svg></button><button class="g2" aria-label="注释比例图标"><svg viewBox="0 0 16 16"><path class="f" d="M8 0l3 10 4 6-7-3-7 3 4-6z"/></svg></button><button class="ratio">1:1 / 100%<svg><use href="#caret"/></svg></button></div>
      <div class="grp"><button aria-label="工作空间"><svg viewBox="0 0 16 16"><circle cx="8" cy="8" r="4.500" fill="none" stroke="#e4e4e4" stroke-width="4"/><path stroke="#e4e4e4" stroke-width="3" d="M8 0v3M8 13v3M0 8h3M13 8h3M2.500 2.500l2 2M11.500 11.500l2 2M2.500 13.500l2-2M11.500 4.500l2-2"/></svg></button><button class="dd" aria-label="工作空间选项"><svg><use href="#caret"/></svg></button></div>
      <button aria-label="注释监视器"><svg viewBox="0 0 16 16"><path class="s2" d="M8 0v16M0 8h16"/></svg></button>
      <button class="unit"><svg viewBox="0 0 8 16"><path class="f" d="M0 0h8v1H3v2h4v1H3v2h4v1H3v2h4v1H3v2h4v1H3v2h5v1H0z"/></svg><span>小数</span><svg class="c"><use href="#caret"/></svg></button>
      <button aria-label="快捷特性"><svg viewBox="0 0 16 16"><path class="s" d="M2.500.5h11v15h-11zM3 2h10M5 6.500h1.500M8 6.500h4M5 9.500h1.500M8 9.500h4M5 12.500h1.500M8 12.500h4"/></svg></button>
      <div class="grp"><button aria-label="锁定界面"><svg viewBox="0 0 16 16"><path class="s" d="M1.500 1.500h12v5M1.500 2v12H7M1 4h13"/><path fill="#fccb6a" d="M8 9h7v7H8z"/></svg></button><button class="dd w" aria-label="锁定选项"><svg><use href="#caret"/></svg></button></div>
      <button class="g3" aria-label="隔离对象"><svg viewBox="0 0 16 16"><path class="s" d="M.5.5h6v5h-6zM4 15l3.500-6 3.500 6z"/><circle class="s" cx="12.500" cy="8" r="3"/></svg></button>
      <button class="on" aria-label="图形性能"><svg viewBox="0 0 16 16"><circle cx="8" cy="8" r="7.500" fill="#b9c3d2" stroke="#fff"/><path stroke="#3c6ea5" fill="none" d="M5 8l2 3 5-6"/></svg></button>
      <button class="g3" aria-label="全屏显示"><svg viewBox="0 0 16 16"><path class="s" d="M.5 2.500h15v11H.5zM9 7l4-3M10 4.500h3V7M7 9l-4 3M3 9v2.500h3"/></svg></button>
      <button aria-label="自定义"><svg viewBox="0 0 16 16"><path class="f" d="M0 2h16v2H0zM0 7h16v2H0zM0 12h16v2H0z"/></svg></button>
    </div>
    <div class="mark">
      <svg width="42" height="42" viewBox="0 0 42 42"><path fill="url(#wave)" d="M0 30Q6 4 42 0 22 8 14 22q-3 8 0 11Q4 38 0 30z" opacity=".85"/><path fill="#2d8f45" opacity=".8" d="M24 15q14-2 16 8-1 12-18 15-8 3-18 3 20-6 26-15 3-8-6-11z"/><path fill="#b6ad3a" opacity=".7" d="M2 41q16-4 22-10-2 9-22 10z"/></svg>
      <div><strong>极光下载站</strong><em>www.xz7.com</em></div>
    </div>
  </footer>
</div>

<svg class="guide" aria-hidden="true">
  <defs><marker id="head" markerUnits="userSpaceOnUse" markerWidth="28" markerHeight="18" refX="26" refY="8" orient="auto"><path fill="#f00" d="M0 0L27 8 0 16l4-8z"/></marker></defs>
  <g stroke="#f00" stroke-width="3" stroke-linecap="round">
    <path marker-end="url(#head)" d="M219 215L291 24"/>
    <path marker-end="url(#head)" d="M331 141L393 49"/>
    <path marker-end="url(#head)" d="M242 523L408 467"/>
    <path marker-end="url(#head)" d="M501 525L587 469"/>
  </g>
  <path fill="#fff" stroke="#222" d="M667.500 462.500v16l4-4 3 6 3-1-3-6h5z"/>
</svg>
</body>
</html>
```
FILE: styles.css
```css
* { box-sizing: border-box; }
:root {
  --dark: #222933;
  --panel: #3b4453;
  --field: #4d586b;
  --text: #e4e6ea;
  --ink: #dcdcdc;
  --dot: #78c6ff;
}
body {
  margin: 0;
  min-height: 100vh;
  padding: 0 2px 2px;
  background: linear-gradient(#ececec, #ececec) 0 0 / 100% calc(100% - 2px) no-repeat #33221f;
  color: var(--text);
  font: 12px/16px "Noto Sans", "Noto Sans CJK SC", sans-serif;
  overflow: hidden;
}
button, input, select {
  margin: 0; padding: 0; border: 0; background: none;
  color: inherit; font: inherit; outline: 0; border-radius: 0;
}
button { white-space: nowrap; }
svg { width: 16px; height: 16px; flex: none; overflow: visible; }
svg[width] { width: auto; height: auto; }
.defs { position: absolute; width: 0; height: 0; overflow: hidden; }
.f { fill: var(--ink); }
.d { fill: var(--dot); }
.s, .s2, .sd, .k { fill: none; stroke: var(--ink); stroke-width: 1; }
.s2 { stroke-width: 2; }
.sd { stroke: var(--dot); }
.k { stroke: #444; }
.g { fill: #656b77; fill-opacity: .8; }
.c { width: 5px; height: 3px; }

.app {
  display: flex; flex-direction: column;
  height: calc(100vh - 2px);
  border: 1px solid #0696d7;
  background: var(--dark);
}

/* title bar */
.title { display: flex; height: 29px; padding-bottom: 2px; align-items: center; justify-content: space-between; position: relative; }
.quick, .info, .quick button, .info button { display: flex; align-items: center; }
.quick { padding-left: 8px; }
.quick button { margin-right: 8px; }
.quick button .c { margin-left: 7px; }
.quick .logo { margin-right: 17px; }
.quick .off { --ink: #666c75; }
.quick .share { gap: 4px; color: #6cc0f8; margin-left: 0; }
.title h1 {
  position: absolute; left: 725px; top: 4px;
  display: flex; gap: 16px; margin: 0;
  font: 400 13px/18px "Open Sans", sans-serif;
}
.info { padding-right: 10px; }
.search { width: 178px; height: 20px; margin: 0 6px 0 4px; padding-left: 4px; background: #454e61; }
.search::placeholder { color: #a9adb5; font-style: italic; opacity: 1; }
.login { gap: 5px; margin-left: 9px; color: #fff; }
.wide { width: 67px; justify-content: flex-end; margin-right: 13px; }
.info .wide + button { margin-right: 8px; }
.info .c { margin-left: 6px; }
.bar { width: 1px; height: 20px; margin: 0 9px 0 10px; background: #4b5463; }
.help span { width: 16px; height: 16px; border-radius: 8px; background: #d9d9d9; color: #222933; font-weight: 700; }
.win { display: flex; align-items: center; gap: 12px; }
.info .win { margin-left: 70px; }
.win button { display: flex; }

/* menu bar */
.menubar { display: flex; height: 19px; padding-left: 5px; border-bottom: 1px solid var(--panel); color: #b1b4ba; }
.menubar > button, .open > button { padding: 0 13px 0 12px; height: 18px; line-height: 16px; }
.open { position: relative; }
.open > .on { background: #454e61; color: #e8eaee; }
.docwin { margin-left: auto; gap: 5px; padding-right: 6px; }
.menu {
  --ink: #606060; --dot: #1c8fe8;
  position: absolute; left: 0; top: 19px; z-index: 5;
  width: 165px; margin: 0; padding: 2px; list-style: none;
  background: #f1f1f1; border: 1px solid #b9b9b9; color: #000;
  box-shadow: 3px 3px 4px rgba(0, 0, 0, .5);
}
.menu li { position: relative; display: flex; align-items: center; height: 22px; padding-left: 3px; line-height: 20px; }
.menu li > svg:first-child, .menu li > span { width: 16px; margin-right: 13px; }
.menu .ar { width: 6px; height: 8px; margin: 0 8px 0 auto; }
.menu .ar use { --ink: #222; }
.menu .sep { height: 7px; padding: 0; }
.menu .sep::after { content: ""; flex: 1; height: 1px; margin-left: 28px; background: #d0d0d0; }
.menu .hot { background: #91c9f7; }
.menu .sub { left: 156px; top: -3px; width: 158px; }

/* ribbon */
.tabs { display: flex; align-items: flex-end; height: 24px; padding-left: 7px; color: #b1b4ba; }
.tabs button { height: 20px; padding: 0 10px; line-height: 20px; }
.tabs .on { padding: 0 9px; margin-right: 1px; background: var(--panel); color: #fff; }
.tabs .under { width: 114px; }
.tabs .mini { padding: 0 21px; }
.ribbon { display: flex; height: 99px; margin: 0 3px 0 4px; background: var(--panel); }
.panel { position: relative; display: flex; flex-direction: column; border-right: 1px solid var(--dark); }
.body { display: flex; height: 79px; padding: 5px 2px 0; }
.name { display: flex; align-items: center; justify-content: center; gap: 7px; height: 20px; line-height: 20px; }
.name svg { width: 8px; height: 4px; }
.big { width: 40px; display: flex; flex-direction: column; align-items: center; padding-top: 2px; line-height: 17px; }
.big > svg { width: 32px; height: 32px; margin-bottom: 4px; }
.big > .c { width: 5px; height: 3px; margin: 4px 0 0; }
.col { display: flex; flex-direction: column; }
.col button { display: flex; align-items: center; gap: 5px; height: 24px; line-height: 18px; }
.col .c { margin-left: 4px; }
.draw { width: 211px; }
.nar { margin-left: 9px; }
.modify { width: 228px; }
.modify .body { padding-left: 7px; }
.modify .col { width: 59px; }
.note { width: 155px; }
.note .body { justify-content: flex-end; padding-right: 6px; }
.layer { width: 252px; }
.stack { display: flex; flex-direction: column; gap: 2px; flex: 1; padding-top: 1px; }
.combo { display: flex; align-items: center; flex: 1; height: 22px; background: var(--field); border: 1px solid #262d39; padding: 0 5px; }
.combo select { flex: 1; appearance: none; line-height: 16px; }
.combo > .c { width: 8px; height: 4px; margin-right: -3px; }
.layer .combo { flex: none; gap: 4px; }
.layer .combo .ib { width: 12px; }
.sw { width: 14px; height: 14px; background: #fff; border: 1px solid #000; margin: 0 2px; }
.big2 { margin: 0 10px 0 7px; width: 14px; height: 16px; border-color: #aaa; }
.ln { width: 64px; height: 1px; margin: 0 2px 0 -2px; background: #fff; }
.tools { display: flex; gap: 8px; height: 22px; padding-left: 4px; }
.tools button { display: flex; align-items: center; gap: 5px; line-height: 18px; }
.cy { --c: #6bdcec; }
.block { width: 135px; }
.block .col { margin-left: 3px; }
.props { width: 243px; }
.prow { display: flex; align-items: center; gap: 2px; }
.launch { position: absolute; right: 5px; bottom: 4px; display: flex; }
.group { width: 68px; }
.group .body { padding-left: 1px; }
.group .big, .util .big { width: 42px; }
.tight button { width: 24px; height: 24px; justify-content: center; }
.tight .sel { height: 22px; margin-top: 1px; border: 1px solid #63b7f5; background: #32516b; }
.util { width: 77px; }
.util .body { padding-left: 5px; }
.util .big { width: 40px; }
.util .tight { margin-left: 4px; }
.clip { width: 75px; border-right: 0; }
.clip .body { padding-left: 3px; }
.clip .big { width: 42px; }
.clip .tight { margin-left: 3px; }

/* file tabs */
.files { display: flex; align-items: flex-end; height: 30px; margin: 0 3px; padding-left: 18px; border-bottom: 4px solid var(--panel); }
.ftab {
  display: flex; align-items: center; justify-content: space-between;
  height: 22px; width: 130px; padding: 0 18px 0 14px; background: #313844; color: #a9adb5; line-height: 22px;
  clip-path: polygon(0 100%, 5px 80%, 8px 30%, 13px 5%, 18px 0, calc(100% - 18px) 0, calc(100% - 12px) 10%, calc(100% - 7px) 70%, 100% 100%);
}
.ftab.on { width: 136px; margin-left: -7px; padding: 0 22px 0 14px; background: var(--panel); color: #fff; font-weight: 700; }
.ftab svg { --ink: #9a9ea6; }
.ftab.add { width: 24px; padding: 0 7px; margin-left: -3px; height: 18px; margin-bottom: 2px; border-radius: 8px; clip-path: none; }

/* workspace */
.work { display: flex; flex: 1; min-height: 0; margin: 0 3px; background: #212830; }
.side { width: 29px; padding: 1px; background: var(--panel); }
.palette { width: 24px; border: 1px solid #262d39; padding: 0 1px 1px 0; display: flex; flex-direction: column; align-items: center; }
.grip { width: 14px; height: 3px; margin: 1px 0 3px; background: repeating-linear-gradient(90deg, #b5b9bf 0 1px, transparent 1px 2px); }
.palette button { display: flex; align-items: center; height: 22px; }
.palette .mtext { font: 600 19px/22px "Open Sans", sans-serif; color: var(--ink); }
.canvas { position: relative; flex: 1; overflow: hidden; }
.vlabel { margin: 5px 4px; line-height: 18px; color: #000; }
.geom { position: absolute; inset: 0; width: 100%; height: 100%; }
.ucs { position: absolute; left: 15px; bottom: 12px; }
.ucs text { fill: #fff; font: 300 18px "Lato", sans-serif; }
.cube {
  position: absolute; right: 22px; top: 22px; width: 121px; height: 121px;
  border: 12px solid #434952; border-radius: 50%;
  display: grid; place-items: center;
}
.cube span { position: absolute; font: 18px/20px "Noto Sans CJK SC", sans-serif; color: #a9abad; }
.cube .n { top: -18px; }
.cube .so { bottom: -19px; }
.cube .w { left: -18px; }
.cube .e { right: -18px; }
.top { width: 52px; height: 52px; padding: 9px; background: #acaeb0; border: 1px solid #70757a; }
.top b { display: block; background: #9ca5ab; color: #4a5158; font: 300 28px/32px "Noto Sans CJK SC", sans-serif; }
.wcs {
  position: absolute; right: 58px; top: 170px; width: 49px; height: 18px;
  display: flex; align-items: center; justify-content: space-between; padding: 0 5px 0 4px;
  background: #9698a5; border: 1px solid #7d808d; border-radius: 4px; color: #4d5260;
  font: 11px/14px "Liberation Sans", sans-serif;
}
.navbar { position: absolute; right: 4px; top: 212px; display: flex; background: #595d61; border-radius: 3px; box-shadow: 0 0 0 2px #191e24; }
.cmd { position: absolute; left: 377px; right: 377px; bottom: 1px; display: flex; height: 25px; }
.grab { --ink: #b0b3b8; display: flex; align-items: center; width: 56px; padding-left: 4px; background: #2a303b; }
.grab i { width: 5px; height: 17px; margin-right: 5px; background: repeating-linear-gradient(#a0a4aa 0 2px, transparent 2px 3px); }
.grab svg + svg { margin-left: 12px; }
.box { --ink: #555; flex: 1; display: flex; align-items: center; gap: 3px; padding: 0 4px; background: #bcbdbf; border-radius: 0 2px 2px 0; }
.box input { flex: 1; padding-left: 3px; font-size: 13px; }
.box input::placeholder { color: #666; font-style: italic; opacity: 1; }
.ime { position: absolute; right: 447px; bottom: 18px; width: 68px; height: 33px; padding: 4px; background: #000; }
.ime div { display: flex; align-items: center; justify-content: center; gap: 4px; height: 25px; border-radius: 4px; background: #fff; color: #333; font-size: 13px; }

/* footer */
.foot { position: relative; display: flex; justify-content: space-between; height: 32px; margin-left: 3px; border-top: 1px solid #454d59; }
.layouts { display: flex; height: 18px; padding-left: 9px; }
.layouts button { padding: 0 11px; background: #2d3541; color: #a9adb5; line-height: 16px; border-radius: 0 0 8px 8px; }
.layouts .on { padding: 0 14px; background: var(--panel); color: #fff; font-weight: 700; }
.layouts .add { --ink: #a9adb5; padding: 0 7px; margin-left: 4px; display: flex; align-items: center; }
.status { display: flex; gap: 2px; height: 24px; margin: 1px 5px 0 0; }
.status button { display: flex; align-items: center; justify-content: center; width: 23px; background: var(--panel); }
.status .on { background: #5c8dc2; box-shadow: inset 0 0 0 1px var(--panel); --ink: #fff; }
.status .xyz { width: 150px; color: #b5b9c0; margin-right: 1px; font-family: Roboto, sans-serif; }
.status .mod { width: 30px; color: #fff; margin-right: 1px; }
.grp { display: flex; background: var(--panel); }
.status .dd { width: 16px; }
.status .dd.w { width: 18px; }
.status .dd svg, .status .ratio svg, .status .unit .c { width: 8px; height: 4px; }
.status .grp .g2 { width: 24px; }
.status .g3 { width: 25px; }
.status .ratio { width: 76px; gap: 6px; font-family: Roboto, sans-serif; }
.status .unit { width: 98px; padding: 0 5px 0 8px; justify-content: flex-start; }
.status .unit svg { width: 8px; }
.status .unit span { margin: 0 auto 0 13px; }
.mark { position: absolute; right: 8px; top: -17px; display: flex; opacity: .85; pointer-events: none; }
.mark div { display: flex; flex-direction: column; margin-left: -2px; }
.mark strong { color: #1c5d99; font-size: 21px; line-height: 24px; }
.mark em { color: #247a42; font: 700 16px/18px "Liberation Sans", sans-serif; }

/* pointer and callout arrows drawn above the window */
.guide { position: absolute; left: 0; top: 0; width: 720px; height: 560px; z-index: 9; pointer-events: none; filter: drop-shadow(2px 2px 2px rgba(0, 0, 0, .5)); }
```
